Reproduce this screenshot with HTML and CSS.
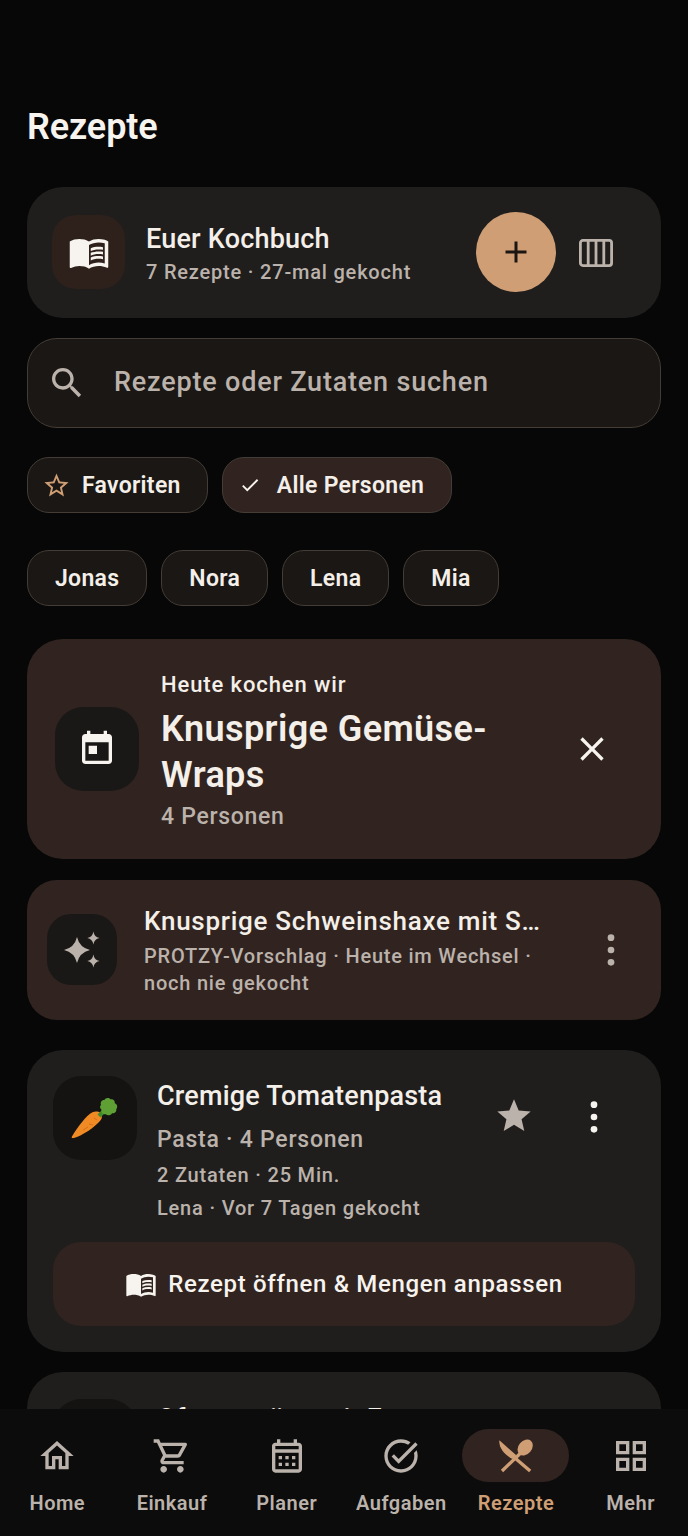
FILE: index.html
```html
<!DOCTYPE html>
<html lang="de">
<head>
<meta charset="utf-8">
<title>Rezepte</title>
<link rel="stylesheet" href="styles.css">
</head>
<body>
<main class="content">
  <h1 class="page-title">Rezepte</h1>

  <section class="hero">
    <div class="tile tile-hero">
      <svg class="ic ic-42 white" viewBox="0 0 24 24"><path d="M12 6C10.55 4.9 8.45 4.5 6.5 4.5S2.45 4.9 1 6v14.65c0 .25.25.5.5.5.1 0 .15-.05.25-.05C3.1 20.45 5.05 20 6.5 20c1.95 0 4.05.4 5.5 1.5 1.35-.85 3.8-1.5 5.5-1.5 1.65 0 3.35.3 4.75 1.05.1.05.15.05.25.05.25 0 .5-.25.5-.5V6c-.6-.45-1.25-.75-2-1-1.11-.35-2.33-.5-3.5-.5-1.95 0-4.05.4-5.5 1.5zm9 12.5c-1.1-.35-2.3-.5-3.5-.5-1.7 0-4.15.65-5.5 1.5V8c1.35-.85 3.8-1.5 5.5-1.5 1.2 0 2.4.15 3.5.5v11.5z"/><path d="M17.5 10.5c.88 0 1.73.09 2.5.26V9.24c-.79-.15-1.64-.24-2.5-.24-1.7 0-3.24.29-4.5.83v1.66c1.13-.64 2.7-.99 4.5-.99zM13 12.49v1.66c1.13-.64 2.7-.99 4.5-.99.88 0 1.73.09 2.5.26V11.9c-.79-.15-1.64-.24-2.5-.24-1.7 0-3.24.3-4.5.83zM17.5 14.33c-1.7 0-3.24.29-4.5.83v1.66c1.13-.64 2.7-.99 4.5-.99.88 0 1.73.09 2.5.26v-1.52c-.79-.16-1.64-.24-2.5-.24z"/></svg>
    </div>
    <div class="hero-text">
      <div class="hero-title">Euer Kochbuch</div>
      <div class="hero-sub">7 Rezepte · 27-mal gekocht</div>
    </div>
    <button class="fab" type="button">
      <svg class="ic ic-36" viewBox="0 0 24 24"><path d="M19 13h-6v6h-2v-6H5v-2h6V5h2v6h6v2z"/></svg>
    </button>
    <svg class="view-toggle" viewBox="0 0 34 28"><rect x="1.4" y="1.4" width="31.2" height="25.2" rx="2.5"/><path d="M9.2 1.4v25.2M17 1.4v25.2M24.8 1.4v25.2"/></svg>
  </section>

  <div class="search">
    <svg class="ic ic-40 muted" viewBox="0 0 24 24"><path d="M15.5 14h-.79l-.28-.27C15.41 12.59 16 11.11 16 9.5 16 5.91 13.09 3 9.5 3S3 5.91 3 9.5 5.91 16 9.5 16c1.61 0 3.09-.59 4.23-1.57l.27.28v.79l5 4.99L20.49 19l-4.99-5zm-6 0C7.01 14 5 11.99 5 9.5S7.01 5 9.5 5 14 7.01 14 9.5 11.99 14 9.5 14z"/></svg>
    <span class="search-text">Rezepte oder Zutaten suchen</span>
  </div>

  <div class="chips chips-first">
    <div class="chip chip-fav">
      <svg class="ic ic-29 accent" viewBox="0 0 24 24"><path d="M22 9.24l-7.19-.62L12 2 9.19 8.63 2 9.24l5.46 4.73L5.82 21 12 17.27 18.18 21l-1.63-7.03L22 9.24zM12 15.4l-3.76 2.27 1-4.28-3.32-2.88 4.38-.38L12 6.1l1.71 4.04 4.38.38-3.32 2.88 1 4.28L12 15.4z"/></svg>
      <span>Favoriten</span>
    </div>
    <div class="chip chip-on">
      <svg class="ic ic-22 white" viewBox="0 0 24 24"><path d="M9 16.17L4.83 12l-1.42 1.41L9 19 21 7l-1.41-1.41z"/></svg>
      <span>Alle Personen</span>
    </div>
  </div>

  <div class="chips chips-second">
    <div class="chip">Jonas</div>
    <div class="chip">Nora</div>
    <div class="chip">Lena</div>
    <div class="chip">Mia</div>
  </div>

  <section class="today">
    <div class="tile tile-today">
      <svg class="ic ic-40 white" viewBox="0 0 24 24"><path d="M19 3h-1V1h-2v2H8V1H6v2H5c-1.11 0-1.99.9-1.99 2L3 19c0 1.1.89 2 2 2h14c1.1 0 2-.9 2-2V5c0-1.1-.9-2-2-2zm0 16H5V8h14v11zM7 10h5v5H7z"/></svg>
    </div>
    <div class="today-text">
      <div class="today-kicker">Heute kochen wir</div>
      <div class="today-title">Knusprige Gemüse-Wraps</div>
      <div class="today-sub">4 Personen</div>
    </div>
    <svg class="ic ic-40 white today-close" viewBox="0 0 24 24"><path d="M19 6.41L17.59 5 12 10.59 6.41 5 5 6.41 10.59 12 5 17.59 6.41 19 12 13.41 17.59 19 19 17.59 13.41 12z"/></svg>
  </section>

  <section class="suggest">
    <div class="tile tile-suggest">
      <svg class="ic ic-40 muted" viewBox="0 0 40 40"><path d="M15 7Q17.5 17.5 28 20 17.5 22.5 15 33 12.5 22.5 2 20 12.5 17.5 15 7Z"/><path d="M31.4 1.5Q32.2 7 37.5 8 32.2 9 31.4 14.5 30.6 9 25.3 8 30.6 7 31.4 1.5Z"/><path d="M31.4 24.5Q32.2 30 37.5 31 32.2 32 31.4 37.5 30.6 32 25.3 31 30.6 30 31.4 24.5Z"/></svg>
    </div>
    <div class="suggest-text">
      <div class="suggest-title">Knusprige Schweinshaxe mit Sauerkraut</div>
      <div class="suggest-sub">PROTZY-Vorschlag · Heute im Wechsel · noch nie gekocht</div>
    </div>
    <svg class="ic ic-40 muted" viewBox="0 0 24 24"><circle cx="12" cy="4.6" r="2"/><circle cx="12" cy="12" r="2"/><circle cx="12" cy="19.4" r="2"/></svg>
  </section>

  <article class="recipe">
    <div class="recipe-top">
      <div class="tile tile-recipe">
        <svg class="carrot" viewBox="0 0 48 42"><path class="carrot-body" d="M1.2 41c-.8-.3-.6-1 .2-2.2C7 30 15 18.5 21.5 15.3c2.5-1.2 6-1 8 .7 2 1.9 1.8 4.8.3 7C25 29.5 10 39.5 3 41c-.7.2-1.3.2-1.8 0z"/><path class="carrot-lines" d="M12 33l5-3M18 27l4 1M23 21l3 2"/><path class="carrot-stem" d="M26.5 17.5l5-5 3 3-5 5z"/><path class="carrot-leaf" d="M30 8c-1-3 1-5.5 3.5-5 .8-2.2 4.5-2.7 6-.7 2.6-.6 4.8 1.3 4.3 4 2.5 1 3.2 4 1.5 5.7.5 2.7-1.8 4.8-4.3 4.2-1.2 2.3-4.5 2.8-6.2 1-2.8.5-5-2-4.3-4.5C28.8 11.5 28.5 9 30 8z"/></svg>
      </div>
      <div class="recipe-text">
        <div class="recipe-title">Cremige Tomatenpasta</div>
        <div class="recipe-meta">Pasta · 4 Personen</div>
        <div class="recipe-line">2 Zutaten · 25 Min.</div>
        <div class="recipe-line">Lena · Vor 7 Tagen gekocht</div>
      </div>
      <svg class="ic ic-40 muted recipe-star" viewBox="0 0 24 24"><path d="M12 17.27L18.18 21l-1.64-7.03L22 9.24l-7.19-.61L12 2 9.19 8.63 2 9.24l5.46 4.73L5.82 21z"/></svg>
      <svg class="ic ic-40 white recipe-more" viewBox="0 0 24 24"><circle cx="12" cy="4.6" r="2"/><circle cx="12" cy="12" r="2"/><circle cx="12" cy="19.4" r="2"/></svg>
    </div>
    <button class="open-btn" type="button">
      <svg class="ic ic-32 white" viewBox="0 0 24 24"><path d="M12 6C10.55 4.9 8.45 4.5 6.5 4.5S2.45 4.9 1 6v14.65c0 .25.25.5.5.5.1 0 .15-.05.25-.05C3.1 20.45 5.05 20 6.5 20c1.95 0 4.05.4 5.5 1.5 1.35-.85 3.8-1.5 5.5-1.5 1.65 0 3.35.3 4.75 1.05.1.05.15.05.25.05.25 0 .5-.25.5-.5V6c-.6-.45-1.25-.75-2-1-1.11-.35-2.33-.5-3.5-.5-1.95 0-4.05.4-5.5 1.5zm9 12.5c-1.1-.35-2.3-.5-3.5-.5-1.7 0-4.15.65-5.5 1.5V8c1.35-.85 3.8-1.5 5.5-1.5 1.2 0 2.4.15 3.5.5v11.5z"/><path d="M17.5 10.5c.88 0 1.73.09 2.5.26V9.24c-.79-.15-1.64-.24-2.5-.24-1.7 0-3.24.29-4.5.83v1.66c1.13-.64 2.7-.99 4.5-.99zM13 12.49v1.66c1.13-.64 2.7-.99 4.5-.99.88 0 1.73.09 2.5.26V11.9c-.79-.15-1.64-.24-2.5-.24-1.7 0-3.24.3-4.5.83zM17.5 14.33c-1.7 0-3.24.29-4.5.83v1.66c1.13-.64 2.7-.99 4.5-.99.88 0 1.73.09 2.5.26v-1.52c-.79-.16-1.64-.24-2.5-.24z"/></svg>
      <span>Rezept öffnen &amp; Mengen anpassen</span>
    </button>
  </article>

  <article class="recipe recipe-next">
    <div class="recipe-top">
      <div class="tile tile-recipe"></div>
      <div class="recipe-text">
        <div class="recipe-title">Ofengemüse mit Feta</div>
      </div>
    </div>
  </article>
</main>

<nav class="nav">
  <div class="nav-item">
    <div class="nav-icon"><svg class="ic ic-40" viewBox="0 0 24 24"><path d="M12 5.69l5 4.5V18h-2v-6H9v6H7v-7.81l5-4.5M12 3L2 12h3v8h6v-6h2v6h6v-8h3L12 3z"/></svg></div>
    <span>Home</span>
  </div>
  <div class="nav-item">
    <div class="nav-icon"><svg class="ic ic-40" viewBox="0 0 24 24"><path d="M15.55 13c.75 0 1.41-.41 1.75-1.03l3.58-6.49c.37-.66-.11-1.48-.87-1.48H5.21l-.94-2H1v2h2l3.6 7.59-1.35 2.44C4.52 15.37 5.48 17 7 17h12v-2H7l1.1-2h7.45zM6.16 6h12.15l-2.76 5H8.53L6.16 6zM7 18c-1.1 0-1.99.9-1.99 2S5.9 22 7 22s2-.9 2-2-.9-2-2-2zm10 0c-1.1 0-1.99.9-1.99 2s.89 2 1.99 2 2-.9 2-2-.9-2-2-2z"/></svg></div>
    <span>Einkauf</span>
  </div>
  <div class="nav-item">
    <div class="nav-icon"><svg class="ic ic-40" viewBox="0 0 24 24"><path d="M19 4h-1V2h-2v2H8V2H6v2H5c-1.1 0-2 .9-2 2v14c0 1.1.9 2 2 2h14c1.1 0 2-.9 2-2V6c0-1.1-.9-2-2-2zm0 16H5V10h14v10zm0-12H5V6h14v2zM9 14H7v-2h2v2zm4 0h-2v-2h2v2zm4 0h-2v-2h2v2zm-8 4H7v-2h2v2zm4 0h-2v-2h2v2zm4 0h-2v-2h2v2z"/></svg></div>
    <span>Planer</span>
  </div>
  <div class="nav-item">
    <div class="nav-icon"><svg class="ic ic-40" viewBox="0 0 24 24"><path d="M22 5.18L10.59 16.6l-4.24-4.24 1.41-1.41 2.83 2.83 10-10L22 5.18zm-2.21 5.04c.13.57.21 1.17.21 1.78 0 4.42-3.58 8-8 8s-8-3.58-8-8 3.58-8 8-8c1.58 0 3.04.46 4.28 1.25l1.44-1.44C16.1 2.67 14.13 2 12 2 6.48 2 2 6.48 2 12s4.48 10 10 10 10-4.48 10-10c0-1.19-.22-2.33-.6-3.39l-1.61 1.61z"/></svg></div>
    <span>Aufgaben</span>
  </div>
  <div class="nav-item nav-active">
    <div class="nav-icon"><svg class="ic ic-40" viewBox="0 0 24 24"><path d="M2 2.6L12.2 11.6 9.8 13.8C5.2 11.2 1.6 7.2 2 2.6Z"/><path class="cutlery-line" d="M9.8 11.8L20.5 21M14.5 10.5L3.6 21"/><ellipse cx="17.5" cy="6.9" rx="4" ry="5.3" transform="rotate(40 17.5 6.9)"/></svg></div>
    <span>Rezepte</span>
  </div>
  <div class="nav-item">
    <div class="nav-icon"><svg class="ic ic-40" viewBox="0 0 24 24"><path d="M3 3v8h8V3H3zm6 6H5V5h4v4zm-6 4v8h8v-8H3zm6 6H5v-4h4v4zm4-16v8h8V3h-8zm6 6h-4V5h4v4zm-6 4v8h8v-8h-8zm6 6h-4v-4h4v4z"/></svg></div>
    <span>Mehr</span>
  </div>
</nav>
</body>
</html>
```

FILE: styles.css
```css
* { box-sizing: border-box; }

html, body { margin: 0; padding: 0; }

body {
  width: 688px;
  height: 1536px;
  overflow: hidden;
  display: flex;
  flex-direction: column;
  background: #070707;
  color: #f4efe9;
  font-family: Roboto, "Noto Sans", sans-serif;
}

.ic { display: block; flex: none; fill: currentColor; }
.ic-22 { width: 22px; height: 22px; }
.ic-29 { width: 29px; height: 29px; }
.ic-32 { width: 32px; height: 32px; }
.ic-36 { width: 36px; height: 36px; }
.ic-40 { width: 40px; height: 40px; }
.ic-42 { width: 42px; height: 42px; }
.white { color: #f7f3ee; }
.muted { color: #bbb2ab; }
.accent { color: #cf9e74; }

.content {
  flex: 1;
  min-height: 0;
  overflow: hidden;
  padding: 107px 27px 0;
}

.page-title {
  margin: 0 0 40px;
  font-size: 36px;
  line-height: 40px;
  font-weight: 600;
  letter-spacing: -0.1px;
  color: #f7f3ee;
}

.tile {
  flex: none;
  display: flex;
  align-items: center;
  justify-content: center;
  background: #1a1816;
}

.hero {
  height: 131px;
  display: flex;
  align-items: center;
  padding-left: 25px;
  background: #1f1e1d;
  border-radius: 36px;
}

.tile-hero {
  width: 73px;
  height: 74px;
  margin-bottom: 1px;
  border-radius: 24px;
  background: #2e211c;
}

.hero-text { flex: 1; margin-left: 21px; padding-top: 2px; }

.hero-title {
  font-size: 27px;
  line-height: 34px;
  font-weight: 500;
  letter-spacing: 0.2px;
}

.hero-sub {
  margin-top: 3px;
  font-size: 20px;
  line-height: 26px;
  font-weight: 500;
  letter-spacing: 0.8px;
  color: #bbb2ab;
}

.fab {
  flex: none;
  width: 80px;
  height: 80px;
  margin-bottom: 1px;
  padding: 0;
  border: 0;
  border-radius: 50%;
  display: flex;
  align-items: center;
  justify-content: center;
  color: #1c1613;
  background: #cf9e74;
}

.view-toggle {
  flex: none;
  width: 34px;
  height: 28px;
  margin: 0 48px 0 23px;
  fill: none;
  stroke: #bbb2ab;
  stroke-width: 2.8;
}

.search {
  height: 90px;
  margin-top: 20px;
  padding-left: 19px;
  display: flex;
  align-items: center;
  gap: 27px;
  background: #1a1714;
  border: 1.5px solid #443c36;
  border-radius: 30px;
}

.search-text {
  padding-bottom: 2px;
  font-size: 27px;
  font-weight: 500;
  letter-spacing: 0.8px;
  color: #bbb2ab;
}

.chips { display: flex; gap: 14px; }
.chips-first { margin-top: 29px; }
.chips-second { margin-top: 37px; }

.chip {
  height: 56px;
  padding: 0 27px;
  display: flex;
  align-items: center;
  font-size: 23px;
  font-weight: 600;
  letter-spacing: 0.3px;
  color: #f4efe9;
  background: #1a1714;
  border: 1.5px solid #443c36;
  border-radius: 22px;
}

.chip-fav { padding: 0 26px 0 14px; gap: 11px; }
.chip-on { padding-left: 16px; gap: 16px; background: #312420; }

.today {
  height: 220px;
  margin-top: 33px;
  padding: 0 49px 0 28px;
  display: flex;
  align-items: center;
  background: #312420;
  border-radius: 36px;
}

.tile-today { width: 84px; height: 84px; border-radius: 28px; }

.today-text { flex: 1; min-width: 0; margin-left: 22px; padding: 3px 50px 0 0; }

.today-kicker {
  font-size: 22px;
  line-height: 30px;
  font-weight: 500;
  letter-spacing: 0.9px;
}

.today-title {
  margin-top: 6px;
  font-size: 36px;
  line-height: 46px;
  font-weight: 600;
  letter-spacing: 0.4px;
}

.today-sub {
  margin-top: 4px;
  font-size: 23px;
  line-height: 30px;
  font-weight: 500;
  letter-spacing: 0.7px;
  color: #bbb2ab;
}

.suggest {
  height: 140px;
  margin-top: 21px;
  padding: 0 30px 0 20px;
  display: flex;
  align-items: center;
  background: #312420;
  border-radius: 30px;
}

.tile-suggest { width: 70px; height: 71px; margin-bottom: 1px; border-radius: 24px; }

.suggest-text { flex: 1; min-width: 0; margin: 0 50px 0 27px; }

.suggest-title {
  overflow: hidden;
  white-space: nowrap;
  text-overflow: ellipsis;
  font-size: 26px;
  line-height: 34px;
  font-weight: 500;
  letter-spacing: 0.72px;
}

.suggest-sub {
  margin-top: 5px;
  font-size: 20px;
  line-height: 27px;
  font-weight: 500;
  letter-spacing: 0.78px;
  color: #bbb2ab;
}

.recipe {
  margin-top: 30px;
  padding: 26px;
  background: #1f1e1d;
  border-radius: 36px;
}

.recipe-next { margin-top: 20px; padding-top: 27px; }

.recipe-top { display: flex; align-items: flex-start; }

.tile-recipe { width: 84px; height: 84px; border-radius: 28px; background: #141312; }

.carrot { width: 48px; height: 42px; }
.carrot-body { fill: #f08a24; }
.carrot-lines { fill: none; stroke: #d96f14; stroke-width: 1; }
.carrot-stem { fill: #3e8a2a; }
.carrot-leaf { fill: #5ea033; }

.recipe-text { flex: 1; min-width: 0; margin-left: 20px; }

.recipe-title {
  font-size: 27px;
  line-height: 40px;
  font-weight: 500;
  letter-spacing: 0.2px;
}

.recipe-meta {
  margin-top: 9px;
  font-size: 23px;
  line-height: 30px;
  font-weight: 500;
  letter-spacing: 0.75px;
  color: #bbb2ab;
}

.recipe-line {
  margin-top: 7px;
  font-size: 20px;
  line-height: 26px;
  font-weight: 500;
  letter-spacing: 0.8px;
  color: #bbb2ab;
}

.recipe-star { margin: 20px 0 0 0; }
.recipe-more { margin: 21px 21px 0 40px; }

.open-btn {
  width: 100%;
  height: 84px;
  margin-top: 21px;
  padding: 0;
  border: 0;
  border-radius: 28px;
  display: flex;
  align-items: center;
  justify-content: center;
  gap: 11px;
  font-family: inherit;
  font-size: 24px;
  font-weight: 500;
  letter-spacing: 0.65px;
  color: #f7f3ee;
  background: #312420;
}

.nav {
  flex: none;
  height: 127px;
  display: grid;
  grid-template-columns: repeat(6, 1fr);
  background: #0c0c0c;
}

.nav-item {
  display: flex;
  flex-direction: column;
  align-items: center;
  padding-top: 20px;
  font-size: 20px;
  line-height: 26px;
  font-weight: 600;
  letter-spacing: 0.5px;
  color: #bbb2ab;
}

.nav-icon {
  width: 107px;
  height: 53px;
  margin-bottom: 8px;
  border-radius: 27px;
  display: flex;
  align-items: center;
  justify-content: center;
}

.cutlery-line { fill: none; stroke: currentColor; stroke-width: 2; }

.nav-active { color: #cf9e74; }
.nav-active .nav-icon { background: #312420; }
```
